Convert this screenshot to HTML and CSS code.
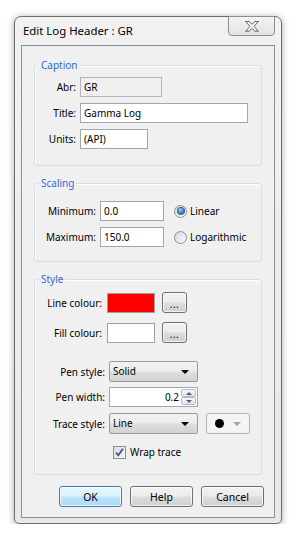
FILE: index.html
```html
<!DOCTYPE html>
<html>
	<head>
		<meta charset="UTF-8">
		<title>Edit Log Header</title>
		<link rel="stylesheet" href="styles.css">
	</head>
	<body>
		<div class="window">
			<div class="titlebar">
				<span class="title">Edit Log Header : GR</span>
				<span class="close">
					<svg width="14" height="11" viewBox="0 0 14 11">
						<polygon points="0.5,0.5 4,0.5 7,3.3 10,0.5 13.5,0.5 9,5.3 13.5,10.3 10,10.3 7,7.4 4,10.3 0.5,10.3 5,5.3" fill="#f6f6f6" stroke="#5d6876" stroke-width="1" stroke-linejoin="round"/>
					</svg>
				</span>
			</div>
			<div class="client">
				<div class="group g-caption">
					<div class="legend">Caption</div>
					<div class="rows">
						<div class="row"><span class="lbl">Abr:</span><span class="edit disabled w-abr">GR</span></div>
						<div class="row"><span class="lbl">Title:</span><span class="edit w-title">Gamma Log</span></div>
						<div class="row"><span class="lbl">Units:</span><span class="edit w-units">(API)</span></div>
					</div>
				</div>

				<div class="group g-scaling">
					<div class="legend">Scaling</div>
					<div class="rows">
						<div class="row">
							<span class="lbl">Minimum:</span><span class="edit w-num">0.0</span>
							<span class="radio checked"></span><span class="opt">Linear</span>
						</div>
						<div class="row">
							<span class="lbl">Maximum:</span><span class="edit w-num">150.0</span>
							<span class="radio"></span><span class="opt">Logarithmic</span>
						</div>
					</div>
				</div>

				<div class="group g-style">
					<div class="legend">Style</div>
					<div class="row r-line">
						<span class="lbl lbl-colour">Line colour:</span>
						<span class="swatch red"></span>
						<span class="btn dots">...</span>
					</div>
					<div class="row r-fill">
						<span class="lbl lbl-colour">Fill colour:</span>
						<span class="swatch"></span>
						<span class="btn dots">...</span>
					</div>
					<div class="row r-pen">
						<span class="lbl lbl-pen">Pen style:</span>
						<span class="combo">Solid<i class="arrow"></i></span>
					</div>
					<div class="row r-width">
						<span class="lbl lbl-pen">Pen width:</span>
						<span class="edit spin-edit">
							<span class="spin-val">0.2</span>
							<span class="spin">
								<span class="spin-btn"><i class="up"></i></span>
								<span class="spin-btn"><i class="down"></i></span>
							</span>
						</span>
					</div>
					<div class="row r-trace">
						<span class="lbl lbl-pen">Trace style:</span>
						<span class="combo">Line<i class="arrow"></i></span>
						<span class="marker"><i class="dot"></i><i class="arrow grey"></i></span>
					</div>
					<div class="row r-wrap">
						<span class="check">
							<svg width="11" height="11" viewBox="0 0 11 11">
								<path d="M2 5.5 L4.3 8.3 L9 1.8" fill="none" stroke="#3d55a0" stroke-width="1.8"/>
							</svg>
						</span>
						<span class="opt">Wrap trace</span>
					</div>
				</div>

				<div class="buttons">
					<span class="btn push default">OK</span>
					<span class="btn push">Help</span>
					<span class="btn push">Cancel</span>
				</div>
			</div>
		</div>
	</body>
</html>
```

FILE: styles.css
```css
*{
	box-sizing: border-box;
}
body{
	margin: 0;
	background: #fff;
	font-family: "Noto Sans", "DejaVu Sans", sans-serif;
	font-size: 10px;
	color: #000;
}
.window{
	width: 268px;
	margin: 16px 0 0 14px;
	padding: 0 6px 5px 6px;
	border: 1px solid #6c6c6c;
	border-radius: 7px 7px 5px 5px;
	background: linear-gradient(#f1f1f1, #e8e8e8);
	box-shadow: 0 1px 7px rgba(0,0,0,.35);
}
.titlebar{
	height: 28px;
	display: flex;
	justify-content: space-between;
	align-items: flex-start;
}
.title{
	margin: 6px 0 0 2px;
	font-size: 11.4px;
	line-height: 16px;
	color: #000;
}
.close{
	width: 47px;
	height: 20px;
	margin-top: -1px;
	border: 1px solid #8d8d8d;
	border-radius: 0 0 4px 4px;
	background: linear-gradient(#f4f4f4, #e3e3e3);
	display: flex;
	justify-content: center;
	align-items: center;
	padding-top: 1px;
}
.close svg{
	display: block;
}
.client{
	height: 473px;
	border: 1px solid #8a8d94;
	background: #f0f0f0;
}
.group{
	margin: 17px 12px 0;
	border: 1px solid #d5dfe5;
	border-radius: 3px;
	box-shadow: inset 1px 1px 0 #fff;
}
.legend{
	display: table;
	margin: -9px 0 0 4px;
	padding: 0 2px;
	line-height: 16px;
	background: #f0f0f0;
	color: #3169d8;
}
.rows{
	display: flex;
	flex-direction: column;
	gap: 6px;
}
.row{
	display: flex;
	align-items: center;
	height: 20px;
}
.lbl{
	text-align: right;
	margin-right: 4px;
	white-space: nowrap;
}
.edit{
	height: 20px;
	line-height: 18px;
	padding: 0 3px;
	border: 1px solid #a3a6ad;
	background: #fff;
	white-space: nowrap;
}
.edit.disabled{
	background: #f0f0f0;
	border-color: #b2b5b9;
}

/* caption */
.g-caption{
	margin-top: 19px;
	padding-bottom: 16px;
}
.g-caption .rows{
	margin-top: 4px;
}
.g-caption .lbl{
	width: 41px;
}
.w-abr{
	width: 82px;
}
.w-title{
	width: 168px;
}
.w-units{
	width: 68px;
}

/* scaling */
.g-scaling{
	padding-bottom: 14px;
}
.g-scaling .rows{
	margin-top: 10px;
}
.g-scaling .lbl{
	width: 61px;
}
.w-num{
	width: 64px;
}
.radio{
	width: 13px;
	height: 13px;
	margin: 0 3px 0 10px;
	border: 1px solid #8f9396;
	border-radius: 50%;
	background: linear-gradient(135deg, #d5d6d8, #fbfbfb);
	display: flex;
	justify-content: center;
	align-items: center;
}
.radio.checked::after{
	content: "";
	width: 6px;
	height: 6px;
	border-radius: 50%;
	background: radial-gradient(circle at 40% 35%, #9ad6fb, #1d77c7 60%, #0b3f78);
	box-shadow: 0 0 0 1px #3b5f87;
}

/* style */
.g-style{
	padding-bottom: 14px;
}
.r-line{
	height: 21px;
	margin-top: 5px;
}
.r-fill{
	height: 21px;
	margin-top: 9px;
}
.r-pen{
	height: 21px;
	margin-top: 18px;
}
.r-width{
	margin-top: 5px;
}
.r-trace{
	height: 21px;
	margin-top: 6px;
}
.r-wrap{
	height: 16px;
	margin-top: 10px;
	padding-left: 78px;
}
.lbl-colour{
	width: 67px;
	margin-right: 5px;
}
.lbl-pen{
	width: 70px;
}
.swatch{
	width: 48px;
	height: 20px;
	border: 1px solid #a0a0a0;
	background: #fff;
}
.swatch.red{
	background: #ff0000;
}
.btn{
	display: flex;
	justify-content: center;
	align-items: center;
	height: 21px;
	border: 1px solid #707070;
	border-radius: 3px;
	background: linear-gradient(#f2f2f2 0%, #ebebeb 48%, #dddddd 52%, #cfcfcf 100%);
	box-shadow: inset 0 0 0 1px rgba(255,255,255,.7);
}
.dots{
	width: 25px;
	margin-left: 7px;
	padding-top: 2px;
	letter-spacing: 0.5px;
}
.combo{
	position: relative;
	width: 89px;
	height: 21px;
	line-height: 19px;
	padding-left: 3px;
	border: 1px solid #9a9a9a;
	border-radius: 2px;
	background: linear-gradient(#f3f3f3 0%, #ececec 48%, #dedede 52%, #d2d2d2 100%);
}
.arrow{
	position: absolute;
	right: 8px;
	top: 8px;
	width: 0;
	height: 0;
	border-left: 4px solid transparent;
	border-right: 4px solid transparent;
	border-top: 4px solid #000;
}
.arrow.grey{
	border-top-color: #a6a6a6;
}
.spin-edit{
	position: relative;
	width: 89px;
	padding: 0;
	display: flex;
	justify-content: flex-end;
}
.spin-val{
	padding-right: 2px;
}
.spin{
	width: 16px;
	display: flex;
	flex-direction: column;
	padding: 1px 1px 1px 0;
}
.spin-btn{
	flex: 1;
	border: 1px solid #b7bcc4;
	border-radius: 2px;
	background: linear-gradient(#f6f7f9, #dfe3ea);
	display: flex;
	justify-content: center;
	align-items: center;
}
.up, .down{
	width: 0;
	height: 0;
	border-left: 3px solid transparent;
	border-right: 3px solid transparent;
}
.up{
	border-bottom: 3px solid #4c5c7c;
}
.down{
	border-top: 3px solid #4c5c7c;
}
.marker{
	position: relative;
	width: 44px;
	height: 21px;
	margin-left: 8px;
	border: 1px solid #b4b4b4;
	border-radius: 2px;
	background: #f4f4f4;
}
.dot{
	position: absolute;
	left: 8px;
	top: 5px;
	width: 9px;
	height: 9px;
	border-radius: 50%;
	background: #000;
}
.check{
	width: 13px;
	height: 13px;
	margin-right: 4px;
	border: 1px solid #8e8f8f;
	background: linear-gradient(135deg, #dcdcdc, #f8f8f8);
	display: flex;
	justify-content: center;
	align-items: center;
}
.check svg{
	display: block;
}

/* buttons */
.buttons{
	display: flex;
	justify-content: flex-end;
	gap: 8px;
	margin: 11px 10px 0 0;
}
.push{
	width: 63px;
	font-size: 10.5px;
}
.push.default{
	border-color: #3c7fb1;
	background: linear-gradient(#eaf6fd 0%, #d9f0fc 48%, #bee6fd 52%, #a7d9f5 100%);
}
```
